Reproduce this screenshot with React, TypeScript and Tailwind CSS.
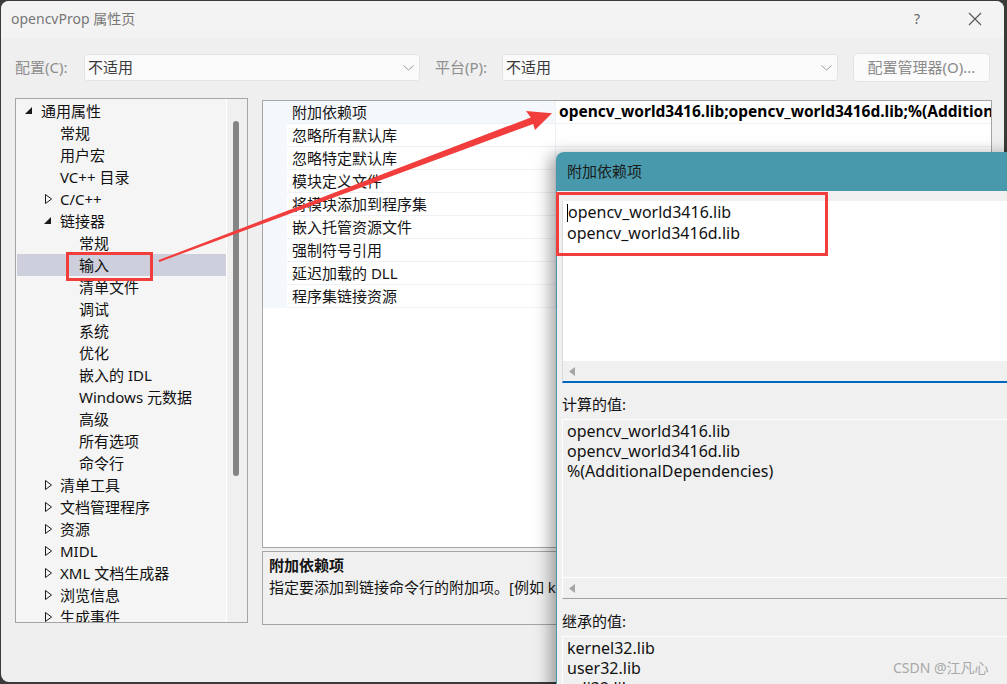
import React from "react";

type TreeItem = { label: string; level: number; state?: "open" | "closed"; selected?: boolean };

const tree: TreeItem[] = [
  { label: "通用属性", level: 0, state: "open" },
  { label: "常规", level: 1 },
  { label: "用户宏", level: 1 },
  { label: "VC++ 目录", level: 1 },
  { label: "C/C++", level: 1, state: "closed" },
  { label: "链接器", level: 1, state: "open" },
  { label: "常规", level: 2 },
  { label: "输入", level: 2, selected: true },
  { label: "清单文件", level: 2 },
  { label: "调试", level: 2 },
  { label: "系统", level: 2 },
  { label: "优化", level: 2 },
  { label: "嵌入的 IDL", level: 2 },
  { label: "Windows 元数据", level: 2 },
  { label: "高级", level: 2 },
  { label: "所有选项", level: 2 },
  { label: "命令行", level: 2 },
  { label: "清单工具", level: 1, state: "closed" },
  { label: "文档管理程序", level: 1, state: "closed" },
  { label: "资源", level: 1, state: "closed" },
  { label: "MIDL", level: 1, state: "closed" },
  { label: "XML 文档生成器", level: 1, state: "closed" },
  { label: "浏览信息", level: 1, state: "closed" },
  { label: "生成事件", level: 1, state: "closed" },
];

const indent = ["pl-[8px]", "pl-[27px]", "pl-[46px]"];

const props = [
  "附加依赖项",
  "忽略所有默认库",
  "忽略特定默认库",
  "模块定义文件",
  "将模块添加到程序集",
  "嵌入托管资源文件",
  "强制符号引用",
  "延迟加载的 DLL",
  "程序集链接资源",
];

function Chevron() {
  return (
    <svg width="11" height="6" viewBox="0 0 11 6" className="shrink-0">
      <polyline points="0.5,0.5 5.5,5 10.5,0.5" fill="none" stroke="#9a9a9a" strokeWidth="1" />
    </svg>
  );
}

function Combo() {
  return (
    <div className="flex h-[27px] w-[336px] items-center justify-between rounded-[3px] border border-[#e4e4e4] bg-[#fafafa] pl-[3px] pr-[5px] text-[15px] text-[#3a3a3a]">
      <span>不适用</span>
      <Chevron />
    </div>
  );
}

function LeftArrow() {
  return (
    <svg width="6" height="9" viewBox="0 0 6 9">
      <polygon points="6,0 0,4.5 6,9" fill="#a6a6a6" />
    </svg>
  );
}

function TreeToggle({ state }: { state?: "open" | "closed" }) {
  return (
    <div className="flex w-[16px] shrink-0 items-center">
      {state === "open" && (
        <svg width="8" height="8" viewBox="0 0 8 8">
          <polygon points="7,0 7,7 0,7" fill="#1a1a1a" />
        </svg>
      )}
      {state === "closed" && (
        <svg width="8" height="10" viewBox="0 0 8 10" className="ml-[1px]">
          <polygon points="0.5,0.5 6.5,5 0.5,9.5" fill="none" stroke="#1a1a1a" strokeWidth="1" />
        </svg>
      )}
    </div>
  );
}

export default function App() {
  return (
    <div className="relative h-[684px] w-[1007px] overflow-hidden bg-[#3a3a3a] pb-[2px] pl-[1px] pr-[3px] pt-[1px] font-['Noto_Sans','Noto_Sans_CJK_SC',sans-serif]">
      {/* main window */}
      <div className="flex h-full flex-col overflow-hidden rounded-[8px] bg-[#efefef]">
        {/* title bar */}
        <div className="flex h-[37px] items-center bg-[#f3f3f3] pb-[2px] pl-[10px]">
          <span className="text-[14px] leading-[20px] text-[#777777]">opencvProp 属性页</span>
          <div className="ml-auto flex h-full">
            <div className="flex w-[58px] items-center justify-center text-[14px] text-[#666666]">?</div>
            <div className="flex w-[58px] items-center justify-center">
              <svg width="14" height="14" viewBox="0 0 14 14">
                <path d="M1 1 L13 13 M13 1 L1 13" stroke="#555555" strokeWidth="1.1" />
              </svg>
            </div>
          </div>
        </div>

        {/* config row */}
        <div className="mt-[15px] flex h-[29px] items-center pl-[14px]">
          <span className="w-[69px] text-[15px] text-[#8e8e8e]">配置(C):</span>
          <Combo />
          <span className="ml-[15px] w-[67px] text-[15px] text-[#8e8e8e]">平台(P):</span>
          <Combo />
          <div className="ml-[15px] flex h-[29px] w-[137px] items-center justify-center rounded-[4px] border border-[#e4e4e4] bg-[#fbfbfb] text-[15px] text-[#8a8a8a]">
            配置管理器(O)...
          </div>
        </div>

        {/* content */}
        <div className="mt-[16px] flex gap-[14px] pl-[14px]">
          {/* tree */}
          <div className="flex h-[525px] w-[233px] border border-[#a5a5a5] bg-[#f5f5f5]">
            <div className="flex-1 overflow-hidden pl-[1px] pt-[1px]">
              {tree.map((it, i) => (
                <div
                  key={i}
                  className={`flex h-[22px] items-center whitespace-nowrap text-[15px] text-[#111111] ${indent[it.level]} ${
                    it.selected ? "bg-[#cdd0dc]" : ""
                  }`}
                >
                  <TreeToggle state={it.state} />
                  <span>{it.label}</span>
                </div>
              ))}
            </div>
            <div className="w-[21px] border-l border-white bg-[#f0f0f0] pl-[6px] pt-[22px]">
              <div className="h-[355px] w-[6px] rounded-[3px] bg-[#858585]" />
            </div>
          </div>

          {/* right column */}
          <div className="flex w-[730px] flex-col">
            <div className="mt-[2px] h-[448px] overflow-hidden border border-[#a5a5a5] bg-white">
              {props.map((p, i) => (
                <div key={i} className="flex h-[23px] text-[15px] text-[#141414]">
                  <div className="w-[24px] shrink-0 bg-[#f4f7fb]" />
                  <div
                    className={`flex w-[268px] shrink-0 items-center border-b border-[#edf1f6] pl-[5px] ${
                      i === 0 ? "bg-[#f4f7fb]" : ""
                    }`}
                  >
                    {p}
                  </div>
                  <div className="flex min-w-0 flex-1 items-center overflow-hidden whitespace-nowrap border-b border-l border-[#edf1f6] pl-[3px]">
                    {i === 0 && (
                      <span className="text-[15.5px] font-bold text-black">
                        opencv_world3416.lib;opencv_world3416d.lib;%(AdditionalDependencies)
                      </span>
                    )}
                  </div>
                </div>
              ))}
            </div>
            <div className="mt-[3px] h-[74px] overflow-hidden whitespace-nowrap border border-[#a5a5a5] bg-[#f0f0f0] px-[6px] pt-[2px] text-[15px] leading-[22px] text-[#141414]">
              <div className="font-bold">附加依赖项</div>
              <div>指定要添加到链接命令行的附加项。[例如 kernel32.lib]</div>
            </div>
          </div>
        </div>
      </div>

      {/* dialog window */}
      <div className="absolute left-[556px] top-[152px] flex h-[540px] w-[470px] flex-col overflow-hidden rounded-tl-[8px] bg-[#f0f0f0] shadow-[-6px_2px_16px_rgba(0,0,0,0.35)]">
        <div className="flex h-[39px] shrink-0 items-center bg-[#4799ab] pl-[11px] text-[15px] text-[#1b1b1b]">附加依赖项</div>
        <div className="flex-1 border-l border-[#4799ab] pl-[5px] pt-[10px] text-[#111111]">
          {/* edit box */}
          <div className="border-b-2 border-l border-b-[#0067c0] border-l-[#dadada]">
            <div className="h-[160px] bg-white pl-[4px] pt-[1px] text-[16px] leading-[21px]">
              <div className="flex items-center">
                <span className="inline-block h-[18px] w-[1px] bg-black" />
                <span>opencv_world3416.lib</span>
              </div>
              <div>opencv_world3416d.lib</div>
            </div>
            <div className="flex h-[20px] items-center bg-[#f0f0f0] pl-[6px]">
              <LeftArrow />
            </div>
          </div>

          <div className="mt-[11px] text-[15px] leading-[21px]">计算的值:</div>
          <div className="mt-[4px] border-b border-l border-t border-b-[#a0a0a0] border-l-white border-t-white">
            <div className="h-[157px] pl-[4px] pt-[1px] text-[16px] leading-[20px]">
              <div>opencv_world3416.lib</div>
              <div>opencv_world3416d.lib</div>
              <div>%(AdditionalDependencies)</div>
            </div>
            <div className="flex h-[21px] items-center border-t border-white pl-[6px]">
              <LeftArrow />
            </div>
          </div>

          <div className="mt-[12px] text-[15px] leading-[21px]">继承的值:</div>
          <div className="mt-[4px] border-l border-t border-white">
            <div className="pl-[4px] pt-[1px] text-[16px] leading-[20px]">
              <div>kernel32.lib</div>
              <div>user32.lib</div>
              <div>gdi32.lib</div>
            </div>
          </div>
        </div>
      </div>

      {/* red highlight boxes */}
      <div className="absolute left-[66px] top-[252px] h-[29px] w-[87px] border-[3px] border-[#f23d3d]" />
      <div className="absolute left-[556px] top-[192px] h-[64px] w-[272px] border-[3px] border-[#f23d3d]" />

      {/* red arrow */}
      <svg className="pointer-events-none absolute left-0 top-0" width="1007" height="684" viewBox="0 0 1007 684">
        <polygon
          points="158.65,260.06 530.8,117.4 526,111 552,113.2 535,130 533.2,124 159.35,261.94"
          fill="#f23d3d"
        />
      </svg>

      {/* watermark */}
      <div className="absolute left-[893px] top-[658px] text-[14px] leading-[20px] text-[#a8a8a8]">CSDN @江凡心</div>
    </div>
  );
}
